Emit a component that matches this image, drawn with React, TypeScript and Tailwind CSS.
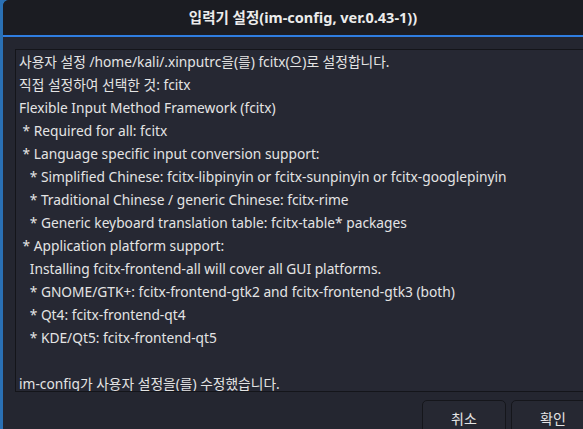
import React from "react";

const lines = [
  "사용자 설정 /home/kali/.xinputrc을(를) fcitx(으)로 설정합니다.",
  "직접 설정하여 선택한 것: fcitx",
  "Flexible Input Method Framework (fcitx)",
  " * Required for all: fcitx",
  " * Language specific input conversion support:",
  "   * Simplified Chinese: fcitx-libpinyin or fcitx-sunpinyin or fcitx-googlepinyin",
  "   * Traditional Chinese / generic Chinese: fcitx-rime",
  "   * Generic keyboard translation table: fcitx-table* packages",
  " * Application platform support:",
  "   Installing fcitx-frontend-all will cover all GUI platforms.",
  "   * GNOME/GTK+: fcitx-frontend-gtk2 and fcitx-frontend-gtk3 (both)",
  "   * Qt4: fcitx-frontend-qt4",
  "   * KDE/Qt5: fcitx-frontend-qt5",
  "",
  "im-config가 사용자 설정을(를) 수정했습니다.",
];

const font = "font-['Noto_Sans','Noto_Sans_CJK_KR',sans-serif]";

export default function App() {
  return (
    <div className={`flex h-[429px] w-[583px] overflow-hidden bg-[#2a6fb0] ${font}`}>
      <div className="w-[3px] shrink-0 bg-[#2a70b4]" />
      <div className="relative flex w-[600px] shrink-0 flex-col overflow-hidden rounded-tl-[6px] bg-[#242630]">
        {/* title bar */}
        <div className="relative flex h-[37px] shrink-0 items-center justify-center border-b-2 border-[#2f7de0] bg-[#1b1c22]">
          <span className="text-[14.5px] font-bold text-[#ececec]">입력기 설정(im-config, ver.0.43-1))</span>
          <svg
            className="absolute right-[9px] top-[12px]"
            width="12"
            height="12"
            viewBox="0 0 12 12"
            fill="none"
            stroke="#eeeeee"
            strokeWidth="2.4"
          >
            <path d="M2 2l8 8M10 2l-8 8" />
          </svg>
        </div>

        {/* body */}
        <div className="flex flex-1 flex-col pl-[12px] pt-[12px]">
          <div className="h-[343px] overflow-hidden border border-[#14151a] bg-[#262833] pl-[3px]">
            {lines.map((line, i) => (
              <div key={i} className="h-[23px] whitespace-pre text-[13.75px] leading-[23px] text-[#e4e4e4]">
                {line}
              </div>
            ))}
          </div>

          <div className="mt-[8px] flex gap-[5px] pl-[407px]">
            <button className="h-[36px] w-[84px] rounded-[5px] border border-[#15161b] bg-[#262832] text-[14px] text-[#e4e4e4]">
              취소
            </button>
            <button className="h-[36px] w-[84px] rounded-[5px] border border-[#15161b] bg-[#262832] text-[14px] text-[#e4e4e4]">
              확인
            </button>
          </div>
        </div>
      </div>
    </div>
  );
}
